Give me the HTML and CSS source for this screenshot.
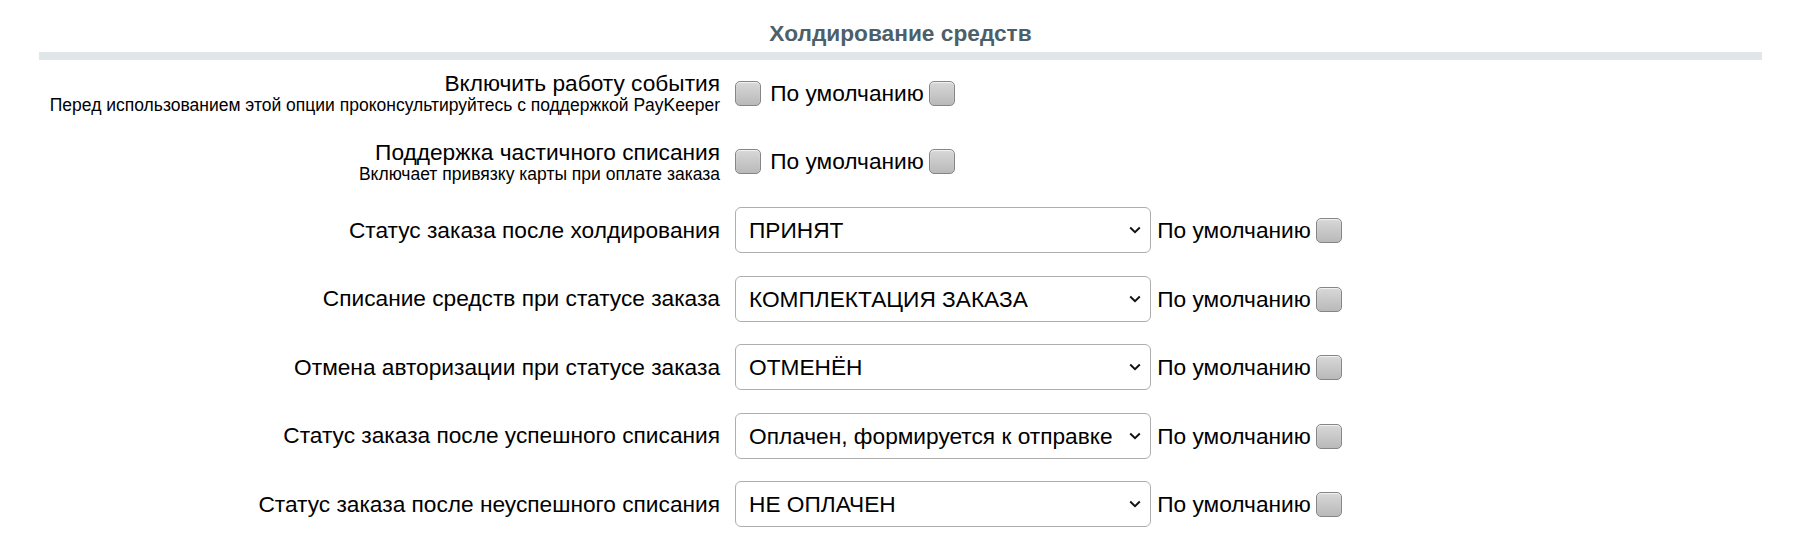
FILE: index.html
```html
<!DOCTYPE html>
<html lang="ru">
<head>
<meta charset="utf-8">
<title>Холдирование средств</title>
<link rel="stylesheet" href="styles.css">
</head>
<body>
<div class="page">
  <h3 class="title">Холдирование средств</h3>
  <div class="form">
    <div class="row">
      <div class="label"><div class="main">Включить работу события</div><div class="hint">Перед использованием этой опции проконсультируйтесь с поддержкой PayKeeper</div></div>
      <div class="control"><input type="checkbox" class="cb cb-lead"> По умолчанию<input type="checkbox" class="cb"></div>
    </div>
    <div class="row">
      <div class="label"><div class="main">Поддержка частичного списания</div><div class="hint">Включает привязку карты при оплате заказа</div></div>
      <div class="control"><input type="checkbox" class="cb cb-lead"> По умолчанию<input type="checkbox" class="cb"></div>
    </div>
    <div class="row">
      <div class="label"><div class="main">Статус заказа после холдирования</div></div>
      <div class="control"><span class="sel"><select><option>ПРИНЯТ</option></select><svg class="chev" width="12" height="8" viewBox="0 0 12 8"><polyline points="1.2,1.5 6,6.2 10.8,1.5" fill="none" stroke="#111" stroke-width="1.9"/></svg></span> По умолчанию<input type="checkbox" class="cb"></div>
    </div>
    <div class="row">
      <div class="label"><div class="main">Списание средств при статусе заказа</div></div>
      <div class="control"><span class="sel"><select><option>КОМПЛЕКТАЦИЯ ЗАКАЗА</option></select><svg class="chev" width="12" height="8" viewBox="0 0 12 8"><polyline points="1.2,1.5 6,6.2 10.8,1.5" fill="none" stroke="#111" stroke-width="1.9"/></svg></span> По умолчанию<input type="checkbox" class="cb"></div>
    </div>
    <div class="row">
      <div class="label"><div class="main">Отмена авторизации при статусе заказа</div></div>
      <div class="control"><span class="sel"><select><option>ОТМЕНЁН</option></select><svg class="chev" width="12" height="8" viewBox="0 0 12 8"><polyline points="1.2,1.5 6,6.2 10.8,1.5" fill="none" stroke="#111" stroke-width="1.9"/></svg></span> По умолчанию<input type="checkbox" class="cb"></div>
    </div>
    <div class="row">
      <div class="label"><div class="main">Статус заказа после успешного списания</div></div>
      <div class="control"><span class="sel"><select><option>Оплачен, формируется к отправке</option></select><svg class="chev" width="12" height="8" viewBox="0 0 12 8"><polyline points="1.2,1.5 6,6.2 10.8,1.5" fill="none" stroke="#111" stroke-width="1.9"/></svg></span> По умолчанию<input type="checkbox" class="cb"></div>
    </div>
    <div class="row">
      <div class="label"><div class="main">Статус заказа после неуспешного списания</div></div>
      <div class="control"><span class="sel"><select><option>НЕ ОПЛАЧЕН</option></select><svg class="chev" width="12" height="8" viewBox="0 0 12 8"><polyline points="1.2,1.5 6,6.2 10.8,1.5" fill="none" stroke="#111" stroke-width="1.9"/></svg></span> По умолчанию<input type="checkbox" class="cb"></div>
    </div>
  </div>
</div>
</body>
</html>
```
FILE: styles.css
```css
html, body {
  margin: 0;
  padding: 0;
  background: #fff;
}
body {
  font-family: "Liberation Sans", Arial, sans-serif;
  color: #000;
}
.page {
  margin: 0 38px 0 39px;
}
.title {
  margin: 0;
  padding: 21px 0 6px;
  font-size: 22.7px;
  line-height: 25px;
  font-weight: bold;
  color: #4d5f68;
  text-align: center;
  border-bottom: 8px solid #e1e6e8;
}
.form {
  margin-top: -1px;
}
.row {
  display: grid;
  grid-template-columns: 696px 1fr;
  align-items: center;
  height: 68.5px;
}
.label {
  text-align: right;
  padding-right: 15px;
}
.main {
  font-size: 22.7px;
  line-height: 25px;
}
.hint {
  font-size: 17.5px;
  line-height: 19px;
}
.control {
  font-size: 22.7px;
  line-height: 25px;
  white-space: nowrap;
}
.cb {
  -webkit-appearance: none;
  appearance: none;
  display: inline-block;
  width: 26px;
  height: 25px;
  margin: 0 0 0 5px;
  padding: 0;
  box-sizing: border-box;
  border: 1px solid #858585;
  border-radius: 5px;
  background: linear-gradient(#d8d8d8, #b9b9b9);
  box-shadow: inset 0 1px 1px rgba(255,255,255,0.7);
  vertical-align: -5px;
}
.cb-lead {
  margin: 0 3px 0 0;
}
.sel {
  position: relative;
  display: inline-flex;
  vertical-align: baseline;
}
.sel select {
  -webkit-appearance: none;
  appearance: none;
  width: 416px;
  height: 46px;
  box-sizing: border-box;
  margin: 0;
  padding: 0 30px 0 13px;
  border: 1px solid #aeaeae;
  border-radius: 6px;
  background: #fff;
  font-family: "Liberation Sans", Arial, sans-serif;
  font-size: 22.7px;
  color: #000;
}
.chev {
  position: absolute;
  right: 10px;
  top: 19px;
  pointer-events: none;
}
```
